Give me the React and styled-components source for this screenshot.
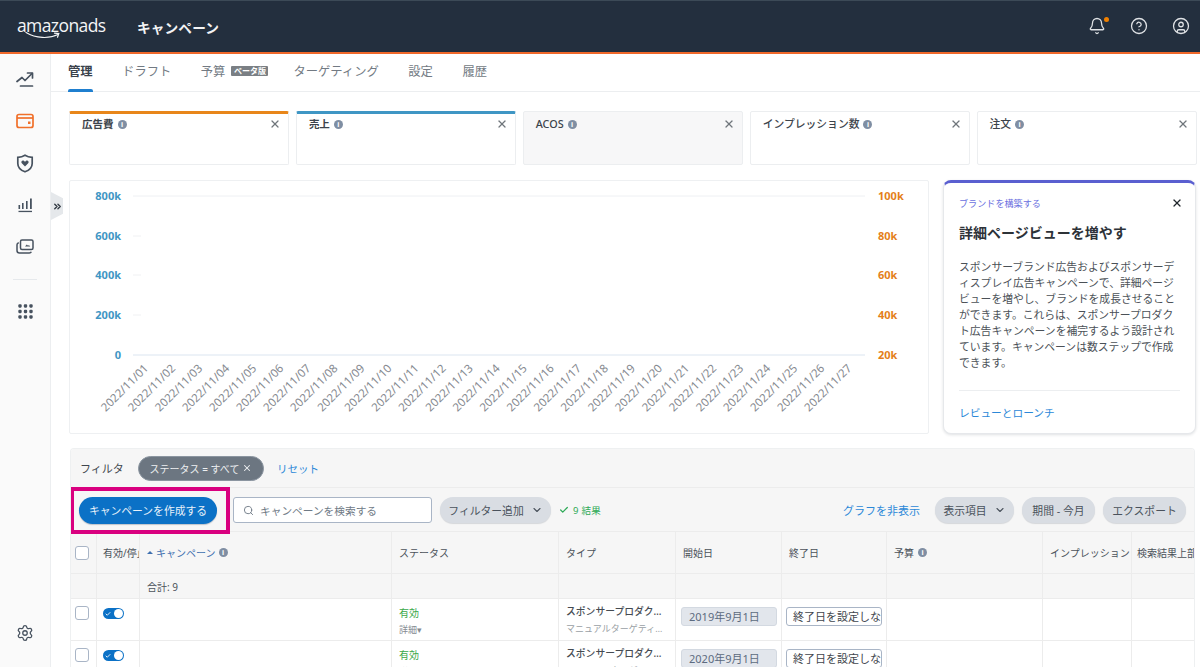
import React from 'react';
import styled, { createGlobalStyle } from 'styled-components';
import { Bell, CircleHelp, CircleUser, Settings, ChevronDown, Search, Check, X, ChevronsRight } from 'lucide-react';

const Global = createGlobalStyle`
  html, body { margin: 0; padding: 0; background: #fff; }
  body { font-family: "Noto Sans", "Noto Sans CJK JP", sans-serif; color: #3a4048; }
  * { box-sizing: border-box; }
`;

const Page = styled.div`
  width: 1200px; height: 667px; overflow: hidden; position: relative;
  display: flex; flex-direction: column; background: #fff;
`;
const Header = styled.header`
  height: 54px; flex: none; background: #232f3e; border-top: 1px solid #3c4a57;
  border-bottom: 2px solid #f0682a; display: flex; align-items: center; padding: 0 10px 0 17px; color: #fff;
`;
const Logo = styled.div`
  position: relative; width: 89px; height: 28px; font-family: "Open Sans", sans-serif; font-weight: 500;
  font-size: 17.5px; line-height: 24px; letter-spacing: -0.6px; color: #f4f5f6; white-space: nowrap;
  svg { position: absolute; left: 8px; top: 18px; }
`;
const LogoAds = styled.span` font-weight: 400; `;
const HeaderTitle = styled.div`
  margin-left: 31px; font-size: 13.7px; font-weight: 700; color: #f2f3f4; letter-spacing: .1px;
`;
const HeaderIcons = styled.div`
  margin-left: auto; display: flex; gap: 24px; align-items: center; color: #dfe2e5; margin-top: -2px;
`;
const BellWrap = styled.span`
  position: relative; display: flex;
  &::after { content: ""; position: absolute; right: -3px; top: 0; width: 5px; height: 5px; border-radius: 50%; background: #f08000; }
`;
const Body = styled.div` flex: 1; display: flex; min-height: 0; `;
const Sidebar = styled.nav`
  width: 51px; flex: none; background: #fafafa; border-right: 1px solid #eceef0;
  display: flex; flex-direction: column; align-items: center; padding-top: 4px; color: #4a5562;
`;
const NavIcon = styled.div`
  height: 42px; width: 100%; display: flex; align-items: center; justify-content: center;
  color: ${p => p.$active ? '#f0702a' : '#47525f'};
`;
const NavRule = styled.div` width: 24px; height: 1px; background: #e6e9ec; margin: 11px 0 10px; `;
const NavBottom = styled.div` margin-top: auto; padding-bottom: 25px; display: flex; color: #47525f; `;
const Expander = styled.div`
  position: absolute; left: 51px; top: 192px; width: 12px; height: 28px; background: #e5e8eb;
  clip-path: polygon(0 0, 100% 22%, 100% 78%, 0 100%); display: flex; align-items: center; justify-content: center; color: #333b44;
`;
const Main = styled.main` flex: 1; min-width: 0; display: flex; flex-direction: column; `;
const Tabs = styled.div`
  height: 38px; flex: none; display: flex; gap: 29.5px; padding-left: 17px; border-bottom: 1px solid #eceef0;
`;
const Tab = styled.div`
  position: relative; display: flex; align-items: center; gap: 6px; height: 37px; padding-bottom: 3px; font-size: 12.3px;
  font-weight: ${p => p.$active ? 700 : 400}; color: ${p => p.$active ? '#3a424c' : '#727a83'};
  ${p => p.$active && `&::after { content: ""; position: absolute; left: 0; right: 0; bottom: -1px; height: 3px; background: #1f7fcf; border-radius: 2px 2px 0 0; }`}
`;
const BetaBadge = styled.span`
  background: #7a7f84; color: #fff; font-size: 8px; font-weight: 700; line-height: 10px; width: 37px; text-align: center; border-radius: 1px; margin-right: -4.500px;
`;
const Content = styled.div` flex: 1; min-height: 0; padding: 19px 3px 0 18px; display: flex; flex-direction: column; `;
const Cards = styled.div` display: flex; gap: 6.700px; flex: none; height: 55px; `;
const Card = styled.div`
  position: relative; width: 220.200px; height: 54px; background: ${p => p.$muted ? '#f7f7f8' : '#fff'};
  border: 1px solid #eceef0; border-top: ${p => p.$accent ? `3px solid ${p.$accent}` : '1px solid #eceef0'};
  border-radius: 2px; padding: ${p => p.$accent ? '2px' : '4px'} 12px 0; font-size: ${p => p.$bold ? '10.500px' : '10.800px'}; display: flex; align-items: flex-start; gap: 4px;
  font-weight: ${p => p.$bold ? 700 : 500}; color: #3c434b;
`;
const CardLabel = styled.span` display: flex; align-items: center; gap: 4px; line-height: 16px; `;
const CloseBtn = styled.span` position: absolute; right: 7px; top: ${p => p.$accent ? 4 : 6}px; display: flex; color: #70767c; `;
const Info = styled.span`
  display: inline-flex; align-items: center; justify-content: center; width: 9px; height: 9px; border-radius: 50%;
  background: #7f8ea3; color: #fff; font-size: 7px; line-height: 9px; font-weight: 700; font-style: normal; flex: none;
`;
const ChartRow = styled.div` display: flex; gap: 14px; margin-top: 14px; flex: none; height: 255px; `;
const ChartPanel = styled.div`
  width: 860px; height: 254px; border: 1px solid #eef0f2; border-radius: 2px; background: #fff;
  svg { display: block; }
`;
const Promo = styled.aside`
  width: 253px; height: 254px; border: 1px solid #e6e8eb; border-top: 3px solid #5a5fd0; border-radius: 8px;
  box-shadow: 0 1px 3px rgba(30,40,60,.14); padding: 14px 15px 0; position: relative; background: #fff;
`;
const PromoKicker = styled.div` font-size: 9.100px; line-height: 14px; color: #6a6fe0; `;
const PromoClose = styled.span` position: absolute; right: 12px; top: 14px; display: flex; color: #20262c; `;
const PromoTitle = styled.h3` margin: 12px 0 0; font-size: 14px; line-height: 20px; font-weight: 700; color: #2d3238; `;
const PromoBody = styled.p` margin: 16px 0 0; font-size: 10.800px; line-height: 16px; color: #4b5157; width: 222px; `;
const PromoRule = styled.div` height: 1px; background: #eceef0; margin-top: 19px; width: 221px; `;
const PromoLink = styled.a` display: block; margin-top: 14px; font-size: 10.700px; line-height: 16px; color: #2b88d8; `;
const TablePanel = styled.section`
  margin-top: 13px; margin-left: 1px; width: 1125px; flex: 1; min-height: 0; overflow: hidden; position: relative;
  border: 1px solid #eef0f1; border-bottom: 0; border-radius: 4px 4px 0 0; background: #fff;
`;
const FilterBar = styled.div`
  height: 39px; background: #f6f6f6; border-bottom: 1px solid #ececec; display: flex; align-items: center; padding: 0 0 0 9px;
`;
const FilterLabel = styled.span` font-size: 11px; color: #3f464d; width: 58px; `;
const Chip = styled.span`
  width: 126px; height: 25px; border-radius: 13px; background: #6c7681; border: 1px solid #8b95a0; color: #eef0f2; font-size: 10px;
  display: flex; align-items: center; justify-content: center; gap: 3px;
`;
const Reset = styled.a` margin-left: 13px; font-size: 10.500px; color: #2b88d8; `;
const Toolbar = styled.div`
  position: relative; height: 44px; background: #f6f6f6; border-bottom: 1px solid #ececec; display: flex; align-items: center; padding: 1px 8px 0 8px;
`;
const Highlight = styled.div`
  position: absolute; left: -1px; top: -1px; width: 160px; height: 47px; border: 4.500px solid #d9007f; pointer-events: none;
`;
const PrimaryBtn = styled.button`
  width: 138px; height: 27px; border: 0; border-radius: 14px; background: #0b71c6; color: #e9f2fa; font: inherit; font-size: 10.800px; flex: none; padding: 0;
  box-shadow: 0 1px 1px rgba(20,40,70,.25);
`;
const SearchBox = styled.div`
  margin-left: 16px; width: 199px; height: 26px; background: #fff; border: 1px solid #a9b5c6; border-radius: 3px; display: flex; align-items: center;
  gap: 6px; padding-left: 9px; font-size: 10.700px; color: #6f7a86; flex: none;
`;
const Pill = styled.button`
  margin-left: ${p => p.$ml || 0}px; width: ${p => p.$w}px; height: 26px; border: 0; border-radius: 13px; background: #d9dde3; color: #4a525c; font: inherit; font-size: 10.800px;
  display: flex; align-items: center; justify-content: center; gap: 7px; flex: none; padding: 0; box-shadow: 0 1px 1px rgba(30,40,60,.15);
`;
const ResultCount = styled.span`
  margin-left: 8px; display: flex; align-items: center; gap: 4px; color: #2eaa57; font-size: 9.500px; letter-spacing: .3px;
`;
const HideLink = styled.a` margin-left: auto; font-size: 11px; color: #2b88d8; `;
const TableRow = styled.div`
  display: grid; grid-template-columns: 26px 43px 252px 167px 117px 106px 105px 156px 89px 1fr;
  height: ${p => p.$h}px; background: ${p => p.$shade ? '#f6f6f6' : '#fff'}; border-bottom: 1px solid #ececec;
`;
const Cell = styled.div`
  border-right: 1px solid #ececec; padding: ${p => p.$pad || '0 7px'}; font-size: 10px; color: #4b525a; overflow: hidden; white-space: nowrap;
  display: flex; align-items: ${p => p.$top ? 'flex-start' : 'center'}; gap: 4px; min-width: 0;
  &:last-child { border-right: 0; }
`;
const CheckBox = styled.span`
  width: 14px; height: 14px; border: 1px solid #a9b5c6; border-radius: 3px; background: #fff; flex: none;
`;
const Toggle = styled.span`
  position: relative; width: 21px; height: 11px; border-radius: 6px; background: #0b71c6; flex: none; display: flex; align-items: center; padding-left: 2px; color: #fff;
  &::after { content: ""; position: absolute; right: 1px; top: 1px; width: 9px; height: 9px; border-radius: 50%; background: #fff; }
`;
const SortHead = styled.span` color: #3f70b0; display: flex; align-items: center; gap: 3px; `;
const SortCaret = styled.span`
  width: 0; height: 0; border-left: 3px solid transparent; border-right: 3px solid transparent; border-bottom: 3.500px solid #3f70b0;
`;
const Stack = styled.div` display: flex; flex-direction: column; gap: 4px; min-width: 0; `;
const StatusOk = styled.span` color: #3aa84a; font-size: 10px; line-height: 14px; `;
const Detail = styled.span` color: #868c92; font-size: 9px; line-height: 12px; `;
const TypeName = styled.span` font-size: 9.800px; font-weight: 500; line-height: 14px; color: #454b52; overflow: hidden; text-overflow: ellipsis; `;
const TypeSub = styled.span` font-size: 9px; line-height: 12px; color: #9a9fa5; overflow: hidden; text-overflow: ellipsis; `;
const DateBox = styled.div`
  width: 96px; height: 19px; border-radius: 3px; background: #e2e6ec; border: 1px solid #d3d9e1; color: #5d6b80; font-size: 11px; line-height: 17px; padding-left: 7px;
`;
const EndBox = styled.div`
  width: 96px; height: 19px; border-radius: 3px; background: #fff; border: 1px solid #a9b5c6; color: #3f464d; font-size: 11px; line-height: 17px; padding-left: 6px; overflow: hidden; white-space: nowrap;
`;

const dates = Array.from({ length: 27 }, (_, i) => `2022/11/${String(i + 1).padStart(2, '0')}`);
const ticks = [['800k', '100k', 15], ['600k', '80k', 55], ['400k', '60k', 94], ['200k', '40k', 134], ['0', '20k', 174]];

function Chart() {
  return (
    <svg width="858" height="252" viewBox="0 0 858 252" fontFamily='"Noto Sans", sans-serif'>
      {ticks.map(([l, r, y], i) => (
        <g key={l}>
          <text x="51" y={y + 4} textAnchor="end" fontSize="11" fontWeight="700" fill="#3f96c4">{l}</text>
          <text x="808" y={y + 4} fontSize="11" fontWeight="700" fill="#e47f1a">{r}</text>
          {i === 0 || i === 4
            ? <line x1="63" x2="795" y1={y} y2={y} stroke={i === 4 ? '#dbe5f0' : '#eef0f3'} />
            : <line x1="63" x2="71" y1={y} y2={y} stroke="#f0f1f3" />}
        </g>
      ))}
      {dates.map((d, i) => (
        <text key={d} transform={`translate(${79 + i * 27.05} 188) rotate(-45)`} textAnchor="end" fontSize="11.500" fill="#85898f">{d}</text>
      ))}
    </svg>
  );
}

const Trend = () => (
  <svg width="18" height="17" viewBox="0 0 18 17" fill="none" stroke="currentColor" strokeWidth="1.700" strokeLinecap="round" strokeLinejoin="round">
    <path d="M1 10.500 6 6.500l3 3 7-7" /><path d="M11.500 2h5v5" /><path d="M4.500 15h12" />
  </svg>
);
const Wallet = () => (
  <svg width="18" height="16" viewBox="0 0 18 16" fill="none" stroke="currentColor" strokeWidth="1.700">
    <rect x="1" y="1.500" width="16" height="13" rx="2" /><path d="M1 5h16" /><rect x="12" y="8.500" width="2.500" height="2.500" fill="currentColor" stroke="none" />
  </svg>
);
const Shield = () => (
  <svg width="18" height="19" viewBox="0 0 18 19" fill="none" stroke="currentColor" strokeWidth="1.700">
    <path d="M9 1.200c2 1.300 4.500 2 7.200 2.100v6.200c0 4-3 6.800-7.200 8.300-4.200-1.500-7.200-4.300-7.200-8.300V3.300C4.500 3.200 7 2.500 9 1.200z" />
    <path d="M9 12.500 5.800 9.300c-1.500-1.700.8-3.800 2.300-2.400l.9.8.9-.8c1.500-1.400 3.800.7 2.300 2.400z" fill="currentColor" stroke="none" />
  </svg>
);
const Bars = () => (
  <svg width="15" height="15" viewBox="0 0 15 15" fill="currentColor">
    <rect x="0.500" y="7" width="1.600" height="4" /><rect x="4" y="5" width="1.600" height="6" /><rect x="8" y="3" width="1.600" height="8" /><rect x="12" y="0.500" width="1.800" height="10.500" /><rect x="0.500" y="12.800" width="13.500" height="1.300" />
  </svg>
);
const Gallery = () => (
  <svg width="18" height="16" viewBox="0 0 18 16" fill="none" stroke="currentColor" strokeWidth="1.500">
    <rect x="4.500" y="1" width="12.500" height="9.500" rx="1.500" /><path d="M2.800 3.800C1.700 4 1 4.700 1 5.800v5.700C1 13 2 14 3.500 14h9.800c1 0 1.700-.5 2-1.300" />
    <path d="M9 7.500l1.800-2 1.300 1.300.8-.8 1.300 1.500z" fill="currentColor" stroke="none" />
  </svg>
);
const Dots = () => (
  <svg width="15" height="15" viewBox="0 0 15 15" fill="currentColor">
    {[0.300, 5.800, 11.300].flatMap(y => [0.300, 5.800, 11.300].map(x => <rect key={`${x}-${y}`} x={x} y={y} width="3.400" height="3.400" rx="1.100" />))}
  </svg>
);

const rows = ['2019年9月1日', '2020年9月1日'];
const closeIcon = <X size={12} strokeWidth={2.500} />;

export default function App() {
  return (
    <Page>
      <Global />
      <Header>
        <Logo>
          amazon<LogoAds>ads</LogoAds>
          <svg width="42" height="9" viewBox="0 0 42 9" fill="none" stroke="#f4f5f6" strokeWidth="1.200" strokeLinecap="round">
            <path d="M1 1.500C11 7.500 24 8 33 3.500" /><path d="M29.500 2.200 33.800 2.600 32.500 6.200" />
          </svg>
        </Logo>
        <HeaderTitle>キャンペーン</HeaderTitle>
        <HeaderIcons>
          <BellWrap><Bell size={18} strokeWidth={1.700} /></BellWrap>
          <CircleHelp size={18} strokeWidth={1.700} />
          <CircleUser size={18} strokeWidth={1.700} />
        </HeaderIcons>
      </Header>
      <Body>
        <Sidebar>
          <NavIcon><Trend /></NavIcon>
          <NavIcon $active><Wallet /></NavIcon>
          <NavIcon><Shield /></NavIcon>
          <NavIcon><Bars /></NavIcon>
          <NavIcon><Gallery /></NavIcon>
          <NavRule />
          <NavIcon><Dots /></NavIcon>
          <NavBottom><Settings size={18} strokeWidth={1.700} /></NavBottom>
        </Sidebar>
        <Expander><ChevronsRight size={11} strokeWidth={3} /></Expander>
        <Main>
          <Tabs>
            <Tab $active>管理</Tab>
            <Tab>ドラフト</Tab>
            <Tab>予算<BetaBadge>ベータ版</BetaBadge></Tab>
            <Tab>ターゲティング</Tab>
            <Tab>設定</Tab>
            <Tab>履歴</Tab>
          </Tabs>
          <Content>
            <Cards>
              <Card $accent="#e8861a" $bold><CardLabel>広告費<Info>i</Info></CardLabel><CloseBtn $accent>{closeIcon}</CloseBtn></Card>
              <Card $accent="#3f96c4" $bold><CardLabel>売上<Info>i</Info></CardLabel><CloseBtn $accent>{closeIcon}</CloseBtn></Card>
              <Card $muted><CardLabel>ACOS<Info>i</Info></CardLabel><CloseBtn>{closeIcon}</CloseBtn></Card>
              <Card><CardLabel>インプレッション数<Info>i</Info></CardLabel><CloseBtn>{closeIcon}</CloseBtn></Card>
              <Card><CardLabel>注文<Info>i</Info></CardLabel><CloseBtn>{closeIcon}</CloseBtn></Card>
            </Cards>
            <ChartRow>
              <ChartPanel><Chart /></ChartPanel>
              <Promo>
                <PromoKicker>ブランドを構築する</PromoKicker>
                <PromoClose><X size={12} strokeWidth={2.500} /></PromoClose>
                <PromoTitle>詳細ページビューを増やす</PromoTitle>
                <PromoBody>スポンサーブランド広告およびスポンサーディスプレイ広告キャンペーンで、詳細ページビューを増やし、ブランドを成長させることができます。これらは、スポンサープロダクト広告キャンペーンを補完するよう設計されています。キャンペーンは数ステップで作成できます。</PromoBody>
                <PromoRule />
                <PromoLink>レビューとローンチ</PromoLink>
              </Promo>
            </ChartRow>
            <TablePanel>
              <FilterBar>
                <FilterLabel>フィルタ</FilterLabel>
                <Chip>ステータス = すべて<X size={10} strokeWidth={2.500} /></Chip>
                <Reset>リセット</Reset>
              </FilterBar>
              <Toolbar>
                <Highlight />
                <PrimaryBtn>キャンペーンを作成する</PrimaryBtn>
                <SearchBox><Search size={11} strokeWidth={2} />キャンペーンを検索する</SearchBox>
                <Pill $ml={8} $w={111}>フィルター追加<ChevronDown size={12} strokeWidth={2.200} /></Pill>
                <ResultCount><Check size={10} strokeWidth={3} />9 結果</ResultCount>
                <HideLink>グラフを非表示</HideLink>
                <Pill $ml={15} $w={79}>表示項目<ChevronDown size={12} strokeWidth={2.200} /></Pill>
                <Pill $ml={8} $w={73}>期間 - 今月</Pill>
                <Pill $ml={8} $w={83}>エクスポート</Pill>
              </Toolbar>
              <TableRow $h={42} $shade>
                <Cell $pad="0 0 0 4px"><CheckBox /></Cell>
                <Cell $pad="0 0 0 6px">有効/停止</Cell>
                <Cell $pad="0 0 0 7px"><SortHead><SortCaret />キャンペーン<Info>i</Info></SortHead></Cell>
                <Cell>ステータス</Cell>
                <Cell>タイプ</Cell>
                <Cell>開始日</Cell>
                <Cell>終了日</Cell>
                <Cell>予算<Info>i</Info></Cell>
                <Cell $pad="0 0 0 7px">インプレッション</Cell>
                <Cell $pad="0 0 0 5px">検索結果上部</Cell>
              </TableRow>
              <TableRow $h={25} $shade>
                <Cell /><Cell /><Cell $pad="0 0 0 7px">合計: 9</Cell><Cell /><Cell /><Cell /><Cell /><Cell /><Cell /><Cell />
              </TableRow>
              {rows.map(d => (
                <TableRow $h={42} key={d}>
                  <Cell $top $pad="7px 0 0 4px"><CheckBox /></Cell>
                  <Cell $top $pad="9px 0 0 6px"><Toggle><Check size={6} strokeWidth={3.500} /></Toggle></Cell>
                  <Cell />
                  <Cell $top $pad="7px 7px 0"><Stack><StatusOk>有効</StatusOk><Detail>詳細▾</Detail></Stack></Cell>
                  <Cell $top $pad="6px 7px 0"><Stack><TypeName>スポンサープロダクト広告</TypeName><TypeSub>マニュアルターゲティング</TypeSub></Stack></Cell>
                  <Cell $top $pad="8px 0 0 5px"><DateBox>{d}</DateBox></Cell>
                  <Cell $top $pad="8px 0 0 4px"><EndBox>終了日を設定しない</EndBox></Cell>
                  <Cell /><Cell /><Cell />
                </TableRow>
              ))}
            </TablePanel>
          </Content>
        </Main>
      </Body>
    </Page>
  );
}
